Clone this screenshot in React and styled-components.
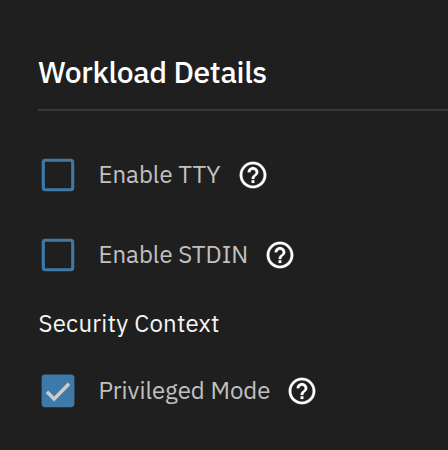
import { useState } from "react";
import styled, { createGlobalStyle } from "styled-components";
import { MdHelpOutline } from "react-icons/md";

const GlobalStyle = createGlobalStyle`
*{
    box-sizing: border-box;
    margin:0;
    padding:0;
}
body{
    background-color: #1f1f1f;
    font-family: "IBM Plex Sans", Roboto, sans-serif;
    overflow: hidden;
}
`
const Container = styled.section`
height:450px;
padding:51px 0 0 38px;
background-color: #1f1f1f;
`
const Title = styled.h2`
height:60px;
border-bottom: 2px solid #393939;
color:#fff;
font-size:30px;
font-weight: 500;
line-height: 42px;
letter-spacing: -.36px;
white-space: nowrap;
`
const Group = styled.div`
display: flex;
flex-direction: column;
gap:32px;
padding-top:${({$top})=>$top};
`
const Subtitle = styled.h3`
margin-top:28px;
padding-left:.5px;
color:#f4f4f4;
font-size:24px;
font-weight: 400;
line-height: 32px;
letter-spacing: .23px;
white-space: nowrap;
`
const Row = styled.div`
display: flex;
align-items: center;
height:48px;
padding-left:3px;
`
const Checkbox = styled.button`
display: flex;
flex-shrink: 0;
width:34px;
height:34px;
border:none;
background: none;
cursor: pointer;
`
const Label = styled.span`
margin-left:23.5px;
padding-bottom:2px;
color:#c1c1c1;
font-size:24px;
line-height: 32px;
white-space: nowrap;
`
const HelpIcon = styled(MdHelpOutline)`
flex-shrink: 0;
width:32px;
height:32px;
margin-left:16px;
color:#fff;

path:last-child{
    stroke: #fff;
    stroke-width:.15px;
}
`

function CheckRow({label, defaultChecked = false}){
    const [checked, setChecked] = useState(defaultChecked);

    return(
        <Row>
            <Checkbox role="checkbox" aria-checked={checked} aria-label={label} onClick={()=>setChecked(!checked)}>
                <svg width="34" height="34" viewBox="0 0 34 34" fill="none">
                    {checked ? (
                        <>
                            <rect x="0.6" y="0.4" width="32.8" height="32.8" rx="3.6" fill="#3d7aaa"/>
                            <path d="M6 17.8L13.1 25L28 9.8" stroke="#cccccc" strokeWidth="3.4"/>
                        </>
                    ) : (
                        <rect x="2.3" y="2.2" width="29.4" height="29.6" rx="2" stroke="#3d7aaa" strokeWidth="3.1"/>
                    )}
                </svg>
            </Checkbox>
            <Label>{label}</Label>
            <HelpIcon />
        </Row>
    )
}

export default function App(){
    return(
        <>
            <GlobalStyle />
            <Container>
                <Title>Workload Details</Title>
                <Group $top="40px">
                    <CheckRow label="Enable TTY" />
                    <CheckRow label="Enable STDIN" />
                </Group>
                <Subtitle>Security Context</Subtitle>
                <Group $top="28px">
                    <CheckRow label="Privileged Mode" defaultChecked />
                </Group>
            </Container>
        </>
    )
}
